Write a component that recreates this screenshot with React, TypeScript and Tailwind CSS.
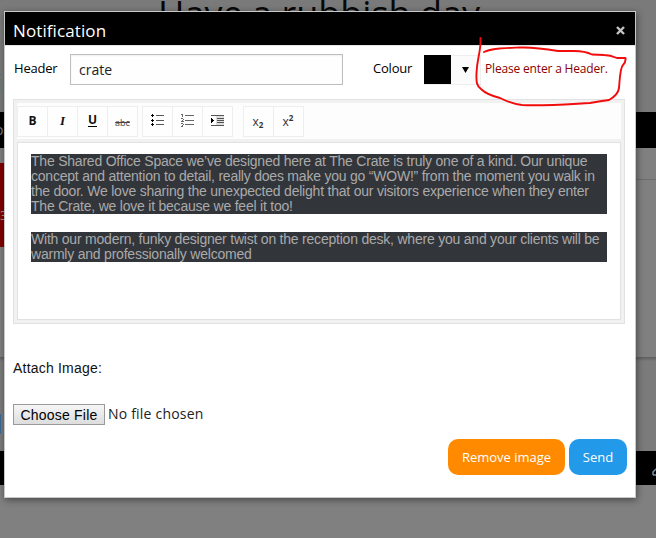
import React from "react";

const paragraphs: string[][] = [
  [
    "The Shared Office Space we’ve designed here at The Crate is truly one of a kind. Our unique",
    "concept and attention to detail, really does make you go “WOW!” from the moment you walk in",
    "the door. We love sharing the unexpected delight that our visitors experience when they enter",
    "The Crate, we love it because we feel it too!",
  ],
  [
    "With our modern, funky designer twist on the reception desk, where you and your clients will be",
    "warmly and professionally welcomed",
  ],
];

function ToolButton({ children }: { children: React.ReactNode }) {
  return (
    <button className="-mr-px flex h-[31px] w-[31px] items-center justify-center border border-[#eeeeee] bg-[#fefefe] pb-[2px] text-[#111]">
      {children}
    </button>
  );
}

function BulletIcon() {
  return (
    <svg width="13" height="13" viewBox="0 0 13 13" shapeRendering="crispEdges">
      <path d="M5 1.5h8M5 6.5h8M5 10.5h8" stroke="#555" />
      <path d="M1 0h1v1h1v1H2v1H1V2H0V1h1zM1 5h1v1h1v1H2v1H1V7H0V6h1zM1 9h1v1h1v1H2v1H1v-1H0v-1h1z" fill="#000" />
    </svg>
  );
}

function NumberIcon() {
  return (
    <svg width="13" height="13" viewBox="0 0 13 13" shapeRendering="crispEdges">
      <path d="M4 1.5h9M4 6.5h9M4 10.5h9" stroke="#666" />
      <path d="M1.5 0v3M0 .5h1M0 4.5h2M2 5.5h1M1 6.5h1M0 7.5h3M0 9.5h2M2 10.5h1M1 11.5h1M0 12.5h2" stroke="#666" />
    </svg>
  );
}

function IndentIcon() {
  return (
    <svg width="13" height="13" viewBox="0 0 13 13" shapeRendering="crispEdges">
      <path d="M5 1h8v10H5z" fill="#ddd" />
      <path d="M0 1.5h13M6 4.5h7M6 6.5h7M6 8.5h7M0 11.5h13" stroke="#555" />
      <path d="M0 4h1v1h1v1h1v1H2v1H1v1H0z" fill="#000" />
    </svg>
  );
}

function Backdrop() {
  return (
    <div className="flex h-[538px] w-full flex-col overflow-hidden">
      <div className="flex h-[112px] shrink-0 flex-col bg-[#7a7a7a]">
        <div className="-mt-[10px] h-[60px] whitespace-nowrap pl-[158px] text-[36px] leading-[48px] text-[#080808]">
          Have a rubbish day
        </div>
        <div className="-ml-[5px] mt-[10px] h-[45px] text-[28px] leading-[45px] text-[#000033]">i</div>
      </div>
      <div className="h-9 shrink-0 bg-black text-[14px] leading-9 text-[#808080]">
        <span className="-ml-[5px]">o</span>
      </div>
      <div className="flex h-[32px] shrink-0 flex-col justify-start border-b border-[#6c6c6c] bg-[#808080]">
        <div className="mt-[15px] h-[17px] w-2 shrink-0 bg-[#800000]" />
      </div>
      <div className="h-[177px] shrink-0 bg-[#808080]">
        <div className="h-[67px] w-2 bg-[#800000] pt-[26px] text-[12px] leading-[20px] text-[#999]">3</div>
      </div>
      <div className="h-1 shrink-0 bg-linear-to-b from-[#5e5e5e] to-[#7a7a7a]" />
      <div className="h-[90px] shrink-0 bg-[#7b7b7b] pt-[53px]">
        <div className="h-5 w-px bg-[#396b96]" />
      </div>
      <div className="flex h-[34px] shrink-0 items-center justify-end overflow-hidden bg-black">
        <svg width="4" height="8" viewBox="0 0 4 8" className="mt-[8px]">
          <path d="M1 7V4l3-3M1 7h3" fill="none" stroke="#7194aa" strokeWidth="1.5" />
        </svg>
      </div>
      <div className="flex-1 bg-[#808080]" />
    </div>
  );
}

export default function App() {
  return (
    <main className="relative h-[538px] w-[656px] overflow-hidden bg-[#808080] font-['Open_Sans',sans-serif]">
      <Backdrop />
      <section className="absolute left-[4px] top-[11px] flex h-[487px] w-[632px] flex-col border border-[#c8c8c8] bg-white shadow-[1px_2px_7px_rgba(0,0,0,0.45)]">
        <header className="flex h-[33px] shrink-0 items-center justify-between bg-black pl-2 pr-[10px] text-white">
          <h1 className="mt-[4px] text-[17px] leading-[24px] tracking-[0.1px]">Notification</h1>
          <svg width="9" height="9" viewBox="0 0 9 9" className="mt-[3px]">
            <path d="M1 1l7 7M8 1L1 8" stroke="#c4c4c4" strokeWidth="2.4" />
          </svg>
        </header>
        <div className="flex h-[54px] shrink-0 border-t border-[#e5e5e5] pl-[9px] pt-[8px] text-[13px] leading-[28px] text-black">
          <label className="w-[56px] tracking-[-0.2px]">Header</label>
          <input
            defaultValue="crate"
            className="h-[31px] w-[273px] border border-[#bebebe] bg-[#fefefe] px-[8px] pb-px text-[14px] text-[#222] shadow-[inset_0_1px_2px_#eee] outline-none"
          />
          <label className="ml-[30px] w-[51px] tracking-[-0.2px]">Colour</label>
          <div className="mt-px flex h-[30px] w-[57px] border-b border-[#eee]">
            <div className="h-[29px] w-[27px] bg-black" />
            <div className="flex flex-1 items-center justify-center border-r border-t border-[#eee] bg-[#fbfbfb]">
              <svg width="7" height="6" viewBox="0 0 7 6">
                <path d="M0 0h7L3.5 6z" fill="#000" />
              </svg>
            </div>
          </div>
          <span className="ml-[4px] whitespace-nowrap text-[12px] leading-[29px] tracking-[-0.17px] text-[#8b0000]">Please enter a Header.</span>
        </div>
        <div className="ml-2 flex h-[225px] w-[612px] shrink-0 flex-col border border-[#e2e2e2] bg-[#f1f1f1] p-[3px]">
          <div className="flex h-9 shrink-0 bg-[#fdfdfd] pt-[3px]">
            <div className="flex">
              <ToolButton><b className="text-[12px]">B</b></ToolButton>
              <ToolButton><span className="font-['Liberation_Serif',serif] text-[13px] font-bold italic">I</span></ToolButton>
              <ToolButton><span className="border-b border-black text-[12px] font-bold leading-[12px]">U</span></ToolButton>
              <ToolButton><span className="mt-[3px] text-[9px] leading-none text-[#444] line-through">abc</span></ToolButton>
            </div>
            <div className="ml-[5px] flex">
              <ToolButton><BulletIcon /></ToolButton>
              <ToolButton><NumberIcon /></ToolButton>
              <ToolButton><IndentIcon /></ToolButton>
            </div>
            <div className="ml-[11px] flex">
              <ToolButton><span className="-ml-px flex pt-[3px] text-[12px] leading-none text-[#333]">x<b className="mt-[5px] text-[8px]">2</b></span></ToolButton>
              <ToolButton><span className="-ml-px flex pt-[3px] text-[12px] leading-none text-[#333]">x<b className="-mt-[2px] text-[8px]">2</b></span></ToolButton>
            </div>
          </div>
          <div className="mt-[3px] flex h-[178px] flex-col gap-[18px] border border-[#e2e2e2] bg-white px-[13px] pt-[11px] font-['Liberation_Sans',Arial,sans-serif] text-[14px] leading-[15px] tracking-[-0.218px] text-[#aaaaaa]">
            {paragraphs.map((lines, i) => (
              <p key={i} className="bg-[#32353a]">
                {lines.map((line) => (
                  <span key={line} className="block whitespace-nowrap">{line}</span>
                ))}
              </p>
            ))}
          </div>
        </div>
        <div className="ml-2 mt-[34px] font-['Liberation_Sans',Arial,sans-serif] text-[14px] leading-5 tracking-[0.2px] text-[#111]">Attach Image:</div>
        <div className="ml-2 mt-[26px] flex h-[21px] items-center text-[14px] text-[#222]">
          <button className="h-[21px] w-[92px] border border-[#9a9a9a] bg-linear-to-b from-[#f6f6f6] to-[#dddddd] pt-px font-['Liberation_Sans',Arial,sans-serif] text-[14px] leading-[18px] tracking-[0.2px] text-black">
            Choose File
          </button>
          <span className="-mt-[2px] ml-[3px] tracking-[0.2px]">No file chosen</span>
        </div>
        <div className="mt-[14px] flex justify-end gap-1 pr-2 text-[13px] text-white">
          <button className="h-9 w-[117px] rounded-[10px] bg-[#ff8a00] pt-px">Remove image</button>
          <button className="h-9 w-[58px] rounded-[10px] bg-[#2299e9] pt-px">Send</button>
        </div>
      </section>
      <svg className="absolute left-[470px] top-[30px]" width="165" height="84" viewBox="470 30 165 84">
        <path
          d="M480.5 38L480.5 43C480 54 477 60 476.5 73C476 83 477 86 481 89C486 94 492 96 500 98C506 101 512 104 522 105C545 106 570 104 590 103Q601 101 609 100Q618 95 619 88C620 77 620 68 623 65Q626 62 625.5 58L617 58Q610 55 604 55L592 54.5Q585 51 574 51H558Q535 47 520 47.5C505 48 492 48 484 52"
          fill="none"
          stroke="#f20c0c"
          strokeWidth="1.9"
          strokeLinecap="round"
          strokeLinejoin="round"
        />
      </svg>
    </main>
  );
}
